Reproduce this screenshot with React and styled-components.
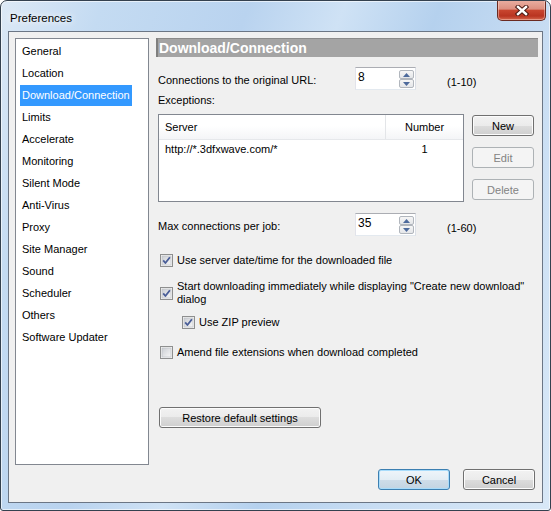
import React from "react";
import styled, { createGlobalStyle } from "styled-components";

const GlobalStyle = createGlobalStyle`
  html, body {
    margin: 0;
    padding: 0;
    background: #ffffff;
  }
  body {
    font-family: "Liberation Sans", Arial, sans-serif;
    font-size: 11px;
    color: #000;
  }
  * {
    box-sizing: border-box;
  }
`;

const Window = styled.div`
  width: 551px;
  height: 511px;
  border: 1px solid #34414f;
  border-radius: 7px 7px 3px 3px;
  background: linear-gradient(
    110deg,
    #dce9f6 0%,
    #c4dbf2 14%,
    #b9d3ef 34%,
    #cfe2f5 47%,
    #b5d1ee 60%,
    #c8ddf3 76%,
    #d8e8f7 100%
  );
  box-shadow: inset 0 0 0 1px rgba(255, 255, 255, 0.6);
  display: flex;
  flex-direction: column;
  overflow: hidden;
`;

const TitleBar = styled.div`
  height: 30px;
  flex: none;
  display: flex;
  justify-content: space-between;
  align-items: flex-start;
  padding: 0 4px 0 9px;
`;

const Title = styled.div`
  font-size: 11.5px;
  line-height: 12px;
  margin-top: 11px;
  color: #000;
  text-shadow: 0 0 6px #fff, 0 0 10px #fff;
`;

const CloseButton = styled.div`
  width: 49px;
  height: 21px;
  margin-top: -1px;
  border: 1px solid #6a2a21;
  border-top: none;
  border-radius: 0 0 5px 5px;
  background: linear-gradient(
    #eab0a3 0%,
    #dd8f80 45%,
    #c8452f 52%,
    #b93421 80%,
    #d5674d 100%
  );
  box-shadow: inset 0 0 0 1px rgba(255, 220, 210, 0.45);
  display: flex;
  align-items: center;
  justify-content: center;
`;

const ClientArea = styled.div`
  flex: 1;
  margin: 0 7px 7px;
  border: 1px solid #6b7685;
  background: #f0f0f0;
  display: flex;
  flex-direction: column;
  padding: 6px 4px 12px 6px;
`;

const Main = styled.div`
  height: 427px;
  display: flex;
  gap: 7px;
`;

const CategoryList = styled.div`
  width: 134px;
  border: 1px solid #828790;
  background: #fff;
  padding-top: 1px;
`;

const CategoryItem = styled.div`
  height: 22px;
  display: flex;
  align-items: center;
  padding-left: 4px;
`;

const CategoryLabel = styled.span`
  line-height: 21px;
  padding: 0 2px;
  background: ${(p) => (p.$active ? "#3399ff" : "transparent")};
  color: ${(p) => (p.$active ? "#fff" : "#000")};
`;

const Panel = styled.div`
  flex: 1;
  display: flex;
  flex-direction: column;
`;

const PanelHeader = styled.div`
  height: 19px;
  background: #a4a4a4;
  border-left: 2px solid #7f7f7f;
  border-top: 1px solid #8a8a8a;
  color: #fff;
  font-weight: bold;
  font-size: 14px;
  line-height: 18px;
  padding-left: 1px;
`;

const SpinRow = styled.div`
  margin-top: ${(p) => p.$top}px;
  margin-left: 2px;
  height: 23px;
  display: grid;
  grid-template-columns: 197px 61px auto;
  align-items: center;
`;

const FieldLabel = styled.span`
  padding-top: 3px;
`;

const RangeHint = styled.span`
  padding-top: 7px;
  margin-left: 31px;
`;

const SpinBox = styled.div`
  height: 23px;
  border: 1px solid #abadb3;
  border-color: #abadb3 #dbdfe6 #e3e9ef #e2e3ea;
  background: #fff;
  display: flex;
  justify-content: space-between;
  padding: 1px 1px 1px 2px;
`;

const SpinValue = styled.span`
  font-size: 12px;
  line-height: 13px;
  padding-top: 2px;
`;

const SpinButtons = styled.div`
  width: 15px;
  display: flex;
  flex-direction: column;
  padding-top: 1px;
`;

const SpinButton = styled.div`
  height: 10px;
  border: 1px solid #b1b6bd;
  border-radius: 2px;
  background: linear-gradient(#f6f6f6, #e4e6e9);
  display: flex;
  align-items: center;
  justify-content: center;
`;

const Caption = styled.div`
  margin: 4px 0 0 2px;
  line-height: 13px;
`;

const ExceptionsArea = styled.div`
  margin: 7px 0 0 2px;
  height: 88px;
  display: flex;
  gap: 8px;
`;

const ExceptionsTable = styled.div`
  width: 306px;
  border: 1px solid #828790;
  background: #fff;
`;

const TableHead = styled.div`
  height: 25px;
  display: grid;
  grid-template-columns: 227px 1fr;
  background: linear-gradient(#ffffff 0%, #ffffff 45%, #f4f5f7 100%);
  border-bottom: 1px solid #e6e8eb;
`;

const HeadCell = styled.div`
  display: flex;
  align-items: center;
  justify-content: ${(p) => (p.$center ? "center" : "flex-start")};
  padding-left: ${(p) => (p.$center ? 0 : 6)}px;
  border-right: ${(p) => (p.$center ? "none" : "1px solid #e3e5e8")};
`;

const TableRow = styled.div`
  height: 17px;
  display: grid;
  grid-template-columns: 227px 1fr;
  align-items: center;
`;

const Cell = styled.div`
  padding-left: ${(p) => (p.$center ? 0 : 6)}px;
  text-align: ${(p) => (p.$center ? "center" : "left")};
`;

const ButtonColumn = styled.div`
  width: 62px;
  display: flex;
  flex-direction: column;
  gap: 11px;
  padding-top: 1px;
`;

const Button = styled.div`
  height: 21px;
  width: ${(p) => p.$width || 62}px;
  flex: none;
  border: 1px solid ${(p) => (p.$disabled ? "#adb2b5" : p.$primary ? "#3c7fb1" : "#707070")};
  border-radius: 3px;
  background: ${(p) =>
    p.$disabled
      ? "#f4f4f4"
      : p.$primary
      ? "linear-gradient(#eef5fa 0%, #e3edf4 50%, #cfdde9 50%, #c2d4e2 100%)"
      : "linear-gradient(#f2f2f2 0%, #ebebeb 50%, #dddddd 50%, #cfcfcf 100%)"};
  box-shadow: inset 0 0 0 1px
    ${(p) => (p.$disabled ? "#f4f4f4" : p.$primary ? "#a8dcfb" : "#fcfcfc")};
  color: ${(p) => (p.$disabled ? "#838383" : "#000")};
  display: flex;
  align-items: center;
  justify-content: center;
  font-size: 11px;
`;

const CheckRow = styled.div`
  margin-top: ${(p) => p.$top}px;
  margin-left: ${(p) => (p.$indent ? 26 : 4)}px;
  display: flex;
  align-items: center;
  gap: 4px;
`;

const CheckText = styled.span`
  line-height: 13px;
  max-width: 350px;
`;

const RestoreWrap = styled.div`
  margin: 48px 0 0 3px;
`;

const Footer = styled.div`
  margin-top: 4px;
  display: flex;
  justify-content: flex-end;
  gap: 13px;
  padding-right: 3px;
`;

const categories = [
  "General",
  "Location",
  "Download/Connection",
  "Limits",
  "Accelerate",
  "Monitoring",
  "Silent Mode",
  "Anti-Virus",
  "Proxy",
  "Site Manager",
  "Sound",
  "Scheduler",
  "Others",
  "Software Updater",
];

const CloseGlyph = () => (
  <svg width="14" height="11" viewBox="0 0 14 11">
    <g strokeLinecap="square">
      <path d="M3 2 L11 9 M11 2 L3 9" stroke="#4a1a14" strokeWidth="4.4" />
      <path d="M3 2 L11 9 M11 2 L3 9" stroke="#ffffff" strokeWidth="2.4" />
    </g>
  </svg>
);

const Arrow = ({ down }) => (
  <svg width="7" height="4" viewBox="0 0 7 4">
    <polygon
      points={down ? "0,0 7,0 3.5,4" : "0,4 7,4 3.5,0"}
      fill="#4d6a9c"
    />
  </svg>
);

const Spinner = ({ value }) => (
  <SpinBox>
    <SpinValue>{value}</SpinValue>
    <SpinButtons>
      <SpinButton>
        <Arrow />
      </SpinButton>
      <SpinButton>
        <Arrow down />
      </SpinButton>
    </SpinButtons>
  </SpinBox>
);

const CheckBox = ({ checked }) => (
  <svg width="13" height="13" viewBox="0 0 13 13" style={{ flex: "none" }}>
    <defs>
      <linearGradient id="cbfill" x1="0" y1="0" x2="1" y2="1">
        <stop offset="0" stopColor="#cbced3" />
        <stop offset="1" stopColor="#f7f7f7" />
      </linearGradient>
    </defs>
    <rect x="0.5" y="0.5" width="12" height="12" fill="#f4f4f4" stroke="#8e8f8f" />
    <rect x="2" y="2" width="9" height="9" fill="url(#cbfill)" stroke="#b9bcc1" strokeWidth="0.6" />
    {checked && (
      <path
        d="M3.2 6.4 L5.4 9 L9.9 3.2"
        fill="none"
        stroke="#4a5e98"
        strokeWidth="1.8"
        strokeLinejoin="round"
      />
    )}
  </svg>
);

const Option = ({ checked, top, indent, children }) => (
  <CheckRow $top={top} $indent={indent}>
    <CheckBox checked={checked} />
    <CheckText>{children}</CheckText>
  </CheckRow>
);

export default function App() {
  return (
    <>
      <GlobalStyle />
      <Window>
        <TitleBar>
          <Title>Preferences</Title>
          <CloseButton>
            <CloseGlyph />
          </CloseButton>
        </TitleBar>
        <ClientArea>
          <Main>
            <CategoryList>
              {categories.map((name) => (
                <CategoryItem key={name}>
                  <CategoryLabel $active={name === "Download/Connection"}>
                    {name}
                  </CategoryLabel>
                </CategoryItem>
              ))}
            </CategoryList>
            <Panel>
              <PanelHeader>Download/Connection</PanelHeader>
              <SpinRow $top={10}>
                <FieldLabel>Connections to the original URL:</FieldLabel>
                <Spinner value="8" />
                <RangeHint>(1-10)</RangeHint>
              </SpinRow>
              <Caption>Exceptions:</Caption>
              <ExceptionsArea>
                <ExceptionsTable>
                  <TableHead>
                    <HeadCell>Server</HeadCell>
                    <HeadCell $center>Number</HeadCell>
                  </TableHead>
                  <TableRow>
                    <Cell>http://*.3dfxwave.com/*</Cell>
                    <Cell $center>1</Cell>
                  </TableRow>
                </ExceptionsTable>
                <ButtonColumn>
                  <Button>New</Button>
                  <Button $disabled>Edit</Button>
                  <Button $disabled>Delete</Button>
                </ButtonColumn>
              </ExceptionsArea>
              <SpinRow $top={11}>
                <FieldLabel>Max connections per job:</FieldLabel>
                <Spinner value="35" />
                <RangeHint>(1-60)</RangeHint>
              </SpinRow>
              <Option checked top={18}>
                Use server date/time for the downloaded file
              </Option>
              <Option checked top={13}>
                Start downloading immediately while displaying "Create new
                download" dialog
              </Option>
              <Option checked top={10} indent>
                Use ZIP preview
              </Option>
              <Option top={17}>
                Amend file extensions when download completed
              </Option>
              <RestoreWrap>
                <Button $width={162}>Restore default settings</Button>
              </RestoreWrap>
            </Panel>
          </Main>
          <Footer>
            <Button $primary $width={72}>
              OK
            </Button>
            <Button $width={72}>Cancel</Button>
          </Footer>
        </ClientArea>
      </Window>
    </>
  );
}
